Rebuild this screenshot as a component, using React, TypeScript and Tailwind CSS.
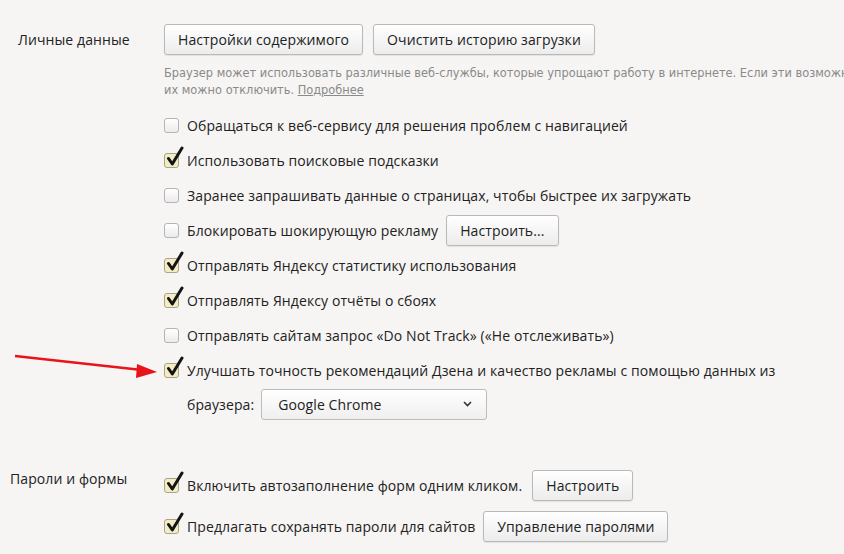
import React from "react";

const font = { fontFamily: '"Open Sans", "Liberation Sans", sans-serif' };

const Button = ({ label, className = "" }: { label: string; className?: string }) => (
  <button
    className={`h-[31px] shrink-0 rounded-[3px] border border-[#b9b9b9] bg-gradient-to-b from-white to-[#ececec] px-[13px] text-[14px] tracking-[0.1px] text-[#222] shadow-[0_1px_1px_rgba(0,0,0,0.08)] ${className}`}
  >
    {label}
  </button>
);

const Checkbox = ({ checked }: { checked?: boolean }) => (
  <span
    className={`relative inline-block h-[15px] w-[15px] shrink-0 rounded-[3px] border ${
      checked
        ? "border-[#a8a38a] bg-[#f4edc4]"
        : "border-[#b4b4b4] bg-gradient-to-b from-white to-[#ebebeb]"
    }`}
  >
    {checked && (
      <svg
        className="absolute left-[1px] top-[-8px]"
        width="18"
        height="22"
        viewBox="0 0 18 22"
      >
        <path
          d="M2.5 12.5 L6.3 18 L16 2"
          fill="none"
          stroke="#141414"
          strokeWidth="3"
          strokeLinecap="round"
          strokeLinejoin="round"
        />
      </svg>
    )}
  </span>
);

const Row = ({
  checked,
  text,
  children,
}: {
  checked?: boolean;
  text: string;
  children?: React.ReactNode;
}) => (
  <div className="flex h-[35px] items-center">
    <Checkbox checked={checked} />
    <span className="ml-[8px] whitespace-nowrap text-[14px] tracking-[0.1px] text-[#222]">
      {text}
    </span>
    {children}
  </div>
);

const App = () => {
  return (
    <div
      className="relative h-[554px] w-[844px] overflow-hidden bg-[#f6f5f4]"
      style={font}
    >
      {/* Личные данные */}
      <div className="flex pt-[24px]">
        <div className="w-[164px] shrink-0 pl-[18px] pt-[5px] text-[14px] tracking-[0.1px] text-[#222]">
          Личные данные
        </div>
        <div className="flex flex-col">
          <div className="flex gap-[10px]">
            <Button label="Настройки содержимого" />
            <Button label="Очистить историю загрузки" />
          </div>
          <div
            className="mt-[10px] whitespace-nowrap text-[11.4px] leading-[17px] text-[#8a8a8a]"
            style={{ fontFamily: '"DejaVu Sans", sans-serif' }}
          >
            Браузер может использовать различные веб-службы, которые упрощают работу в
            интернете. Если эти возможности вам не нужны,
            <br />
            их можно отключить. <span className="underline">Подробнее</span>
          </div>
          <div className="mt-[9px] flex flex-col">
            <Row text="Обращаться к веб-сервису для решения проблем с навигацией" />
            <Row checked text="Использовать поисковые подсказки" />
            <Row text="Заранее запрашивать данные о страницах, чтобы быстрее их загружать" />
            <Row text="Блокировать шокирующую рекламу">
              <Button label="Настроить..." className="ml-[8px]" />
            </Row>
            <Row checked text="Отправлять Яндексу статистику использования" />
            <Row checked text="Отправлять Яндексу отчёты о сбоях" />
            <Row text="Отправлять сайтам запрос «Do Not Track» («Не отслеживать»)" />
            <Row
              checked
              text="Улучшать точность рекомендаций Дзена и качество рекламы с помощью данных из"
            />
            <div className="ml-[23px] flex h-[32px] items-center">
              <span className="text-[14px] tracking-[0.1px] text-[#222]">браузера:</span>
              <div className="ml-[7px] flex h-[31px] w-[226px] items-center justify-between rounded-[3px] border border-[#bcbcbc] bg-gradient-to-b from-white to-[#efefef] pl-[16px] pr-[14px] text-[14px] tracking-[0.1px] text-[#222]">
                <span>Google Chrome</span>
                <svg width="9" height="6" viewBox="0 0 9 6">
                  <path d="M1 1 L4.5 4.5 L8 1" fill="none" stroke="#333" strokeWidth="1.6" />
                </svg>
              </div>
            </div>
          </div>
        </div>
      </div>

      {/* Пароли и формы */}
      <div className="mt-[48px] flex">
        <div className="w-[164px] shrink-0 pl-[10px] text-[14px] tracking-[0.1px] text-[#222]">
          Пароли и формы
        </div>
        <div className="flex flex-col gap-[6px]">
          <Row checked text="Включить автозаполнение форм одним кликом.">
            <Button label="Настроить" className="ml-[10px] w-[101px]" />
          </Row>
          <Row checked text="Предлагать сохранять пароли для сайтов">
            <Button label="Управление паролями" className="ml-[8px]" />
          </Row>
        </div>
      </div>

      {/* красная стрелка */}
      <svg
        className="absolute left-0 top-[345px]"
        width="165"
        height="40"
        viewBox="0 0 165 40"
      >
        <path d="M15 11 L142 25" stroke="#e8141a" strokeWidth="2.6" fill="none" />
        <path d="M157 27 L137 19 L136 33 Z" fill="#e8141a" />
      </svg>
    </div>
  );
};

export default App;
